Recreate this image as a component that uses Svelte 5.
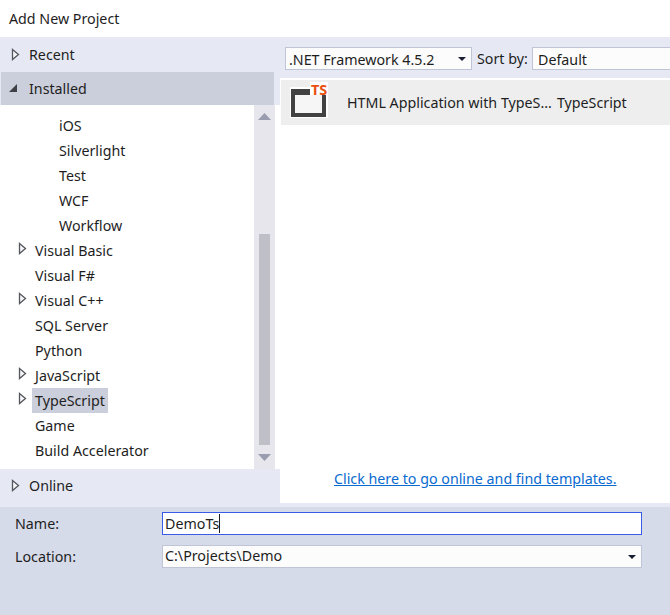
<script>
	const treeItems = [
		{ label: 'iOS', depth: 1 },
		{ label: 'Silverlight', depth: 1 },
		{ label: 'Test', depth: 1 },
		{ label: 'WCF', depth: 1 },
		{ label: 'Workflow', depth: 1 },
		{ label: 'Visual Basic', arrow: true },
		{ label: 'Visual F#' },
		{ label: 'Visual C++', arrow: true },
		{ label: 'SQL Server' },
		{ label: 'Python' },
		{ label: 'JavaScript', arrow: true },
		{ label: 'TypeScript', arrow: true, selected: true },
		{ label: 'Game' },
		{ label: 'Build Accelerator' }
	];
</script>

{#snippet closedArrow()}
	<svg class="arrow" width="9" height="13" viewBox="0 0 9 13">
		<path d="M1.5 1.5 L7.5 6.5 L1.5 11.5 Z" fill="#f5f6fa" stroke="#55565c" stroke-width="1.3" />
	</svg>
{/snippet}

{#snippet caret()}
	<svg class="caret" width="8" height="4" viewBox="0 0 8 4">
		<path d="M0 0 H8 L4 4 Z" fill="#1b1f33" />
	</svg>
{/snippet}

<div class="dialog">
	<header class="title">Add New Project</header>

	<div class="main">
		<aside class="side">
			<div class="group group--recent">
				{@render closedArrow()}
				<span>Recent</span>
			</div>
			<div class="group group--installed">
				<svg class="arrow-open" width="10" height="10" viewBox="0 0 10 10">
					<path d="M9 1 V9 H1 Z" fill="#3f3f46" />
				</svg>
				<span>Installed</span>
			</div>

			<div class="tree">
				<div class="tree__list">
					{#each treeItems as item}
						<div class="tree__row" class:tree__row--deep={item.depth === 1}>
							{#if item.arrow}
								<span class="tree__arrow">{@render closedArrow()}</span>
							{/if}
							<span class="tree__label" class:is-selected={item.selected}>{item.label}</span>
						</div>
					{/each}
				</div>
				<div class="scrollbar">
					<svg width="13" height="7" viewBox="0 0 13 7"><path d="M6.5 0 L13 7 H0 Z" fill="#9a9cb0" /></svg>
					<div class="scrollbar__track"><div class="scrollbar__thumb"></div></div>
					<svg width="13" height="7" viewBox="0 0 13 7"><path d="M0 0 H13 L6.5 7 Z" fill="#9a9cb0" /></svg>
				</div>
			</div>

			<div class="group group--online">
				{@render closedArrow()}
				<span>Online</span>
			</div>
		</aside>

		<section class="content">
			<div class="toolbar">
				<div class="select select--framework">
					<span>.NET Framework 4.5.2</span>
					{@render caret()}
				</div>
				<span class="sort-label">Sort by:</span>
				<div class="select select--sort"><span>Default</span></div>
			</div>

			<div class="results">
				<div class="template">
					<div class="template__icon">
						<svg width="38" height="36" viewBox="0 0 38 36">
							<rect x="0" y="5" width="38" height="31" fill="#fff" />
							<path fill-rule="evenodd" d="M1 7 H36 V35 H1 Z M5 13 V31 H32 V13 Z" fill="#424242" />
							<rect x="5" y="13" width="27" height="18" fill="#f6f6f6" />
							<rect x="20" y="0" width="18" height="13" fill="#fff" />
						</svg>
						<span class="template__badge">TS</span>
					</div>
					<span class="template__name">HTML Application with TypeS...</span>
					<span class="template__type">TypeScript</span>
				</div>
				<a class="online-link" href="#online">Click here to go online and find templates.</a>
			</div>
		</section>
	</div>

	<footer class="form">
		<label class="form__label" for="name">Name:</label>
		<div class="field field--active" id="name">DemoTs<span class="cursor"></span></div>
		<label class="form__label" for="location">Location:</label>
		<div class="field" id="location">
			<span>C:\Projects\Demo</span>
			{@render caret()}
		</div>
	</footer>
</div>

<style>
	:global(body) {
		background: #fff;
	}

	.dialog {
		width: 670px;
		height: 615px;
		display: flex;
		flex-direction: column;
		overflow: hidden;
		font-family: 'Noto Sans', sans-serif;
		font-size: 14.25px;
		color: #1e1e1e;
		background: #fff;
	}

	.title {
		height: 37px;
		padding-left: 9px;
		line-height: 37px;
		flex-shrink: 0;
	}

	.main {
		height: 470px;
		display: flex;
		flex-shrink: 0;
		background: #fff;
		border-bottom: 4px solid #e6e9f4;
		box-sizing: border-box;
	}

	.side {
		width: 280px;
		display: flex;
		flex-direction: column;
		flex-shrink: 0;
	}

	.group {
		display: flex;
		align-items: center;
		box-sizing: border-box;
		padding-bottom: 1px;
		background: #e6e9f4;
	}

	.group--recent {
		height: 35px;
		padding-left: 11px;
		gap: 9px;
	}

	.group--online {
		height: 34px;
		padding-bottom: 2px;
		padding-left: 11px;
		gap: 9px;
	}

	.group--installed {
		height: 33px;
		padding-left: 8px;
		gap: 11px;
		background: linear-gradient(to right, #e6e9f4 1px, #cbcedb 1px, #cbcedb 274px, #e6e9f4 274px);
	}

	.arrow {
		display: block;
	}

	.tree {
		flex: 1;
		min-height: 0;
		display: flex;
		width: 275px;
	}

	.tree__list {
		flex: 1;
		padding-top: 8px;
	}

	.tree__row {
		height: 25px;
		display: flex;
		align-items: center;
		padding-left: 32px;
		position: relative;
	}

	.tree__row--deep {
		padding-left: 56px;
	}

	.tree__arrow {
		position: absolute;
		left: 18px;
		top: 4px;
	}

	.tree__label {
		height: 25px;
		line-height: 25px;
		padding: 0 3px;
	}

	.tree__label.is-selected {
		background: #cbcedb;
	}

	.scrollbar {
		width: 21px;
		display: flex;
		flex-direction: column;
		align-items: center;
		padding: 8px 0;
		box-sizing: border-box;
		background: #e6e6ec;
	}

	.scrollbar__track {
		flex: 1;
		width: 100%;
		display: flex;
		justify-content: center;
	}

	.scrollbar__thumb {
		width: 11px;
		height: 211px;
		margin-top: 114px;
		background: #bfc0c7;
	}

	.content {
		flex: 1;
		min-width: 0;
		display: flex;
		flex-direction: column;
	}

	.toolbar {
		height: 41px;
		display: flex;
		align-items: flex-start;
		padding: 10px 0 0 5px;
		box-sizing: border-box;
		background: #e6e9f4;
		flex-shrink: 0;
	}

	.select {
		height: 23px;
		display: flex;
		align-items: center;
		justify-content: space-between;
		flex-shrink: 0;
		box-sizing: border-box;
		background: #fcfcfc;
		border: 1px solid #bfc5d6;
		padding: 1px 5px 0 3px;
		white-space: nowrap;
	}

	.select--framework {
		width: 187px;
	}

	.select--sort {
		width: 160px;
		padding-left: 5px;
	}

	.sort-label {
		width: 50px;
		margin: 0 5px;
		line-height: 24px;
		white-space: nowrap;
		flex-shrink: 0;
	}

	.results {
		flex: 1;
		display: flex;
		flex-direction: column;
		min-height: 0;
		padding-top: 2px;
	}

	.template {
		height: 45px;
		margin-left: 1px;
		display: flex;
		align-items: center;
		box-sizing: border-box;
		padding: 0 0 1px 9px;
		background: #eeeeee;
		white-space: nowrap;
	}

	.template__icon {
		position: relative;
		flex-shrink: 0;
		align-self: flex-start;
		width: 38px;
		height: 36px;
		margin-top: 2px;
	}

	.template__icon svg {
		display: block;
	}

	.template__badge {
		position: absolute;
		left: 21px;
		top: 0;
		font-size: 14.5px;
		line-height: 14px;
		font-weight: 700;
		color: #e8500f;
	}

	.template__name {
		margin-left: 19px;
	}

	.template__type {
		margin-left: 5px;
	}

	.online-link {
		margin-top: auto;
		margin-bottom: 15px;
		align-self: flex-start;
		margin-left: 54px;
		color: #0a6ad0;
		white-space: nowrap;
	}

	.form {
		flex: 1;
		display: grid;
		grid-template-columns: 147px 480px;
		grid-auto-rows: 23px;
		row-gap: 10px;
		align-content: start;
		align-items: center;
		padding: 5px 0 0 15px;
		background: #d6dbe9;
	}

	.form__label {
		line-height: 23px;
	}

	.field {
		height: 23px;
		display: flex;
		align-items: center;
		justify-content: space-between;
		box-sizing: border-box;
		padding: 0 5px 2px 2px;
		background: #fcfcfc;
		border: 1px solid #bfc5d6;
	}

	.field .caret {
		margin-top: 2px;
	}

	.field--active {
		justify-content: flex-start;
		padding-bottom: 0;
		line-height: 19px;
		background: #fff;
		border-color: #3a5ae8;
	}

	.cursor {
		width: 1px;
		height: 19px;
		background: #1e1e1e;
	}
</style>
